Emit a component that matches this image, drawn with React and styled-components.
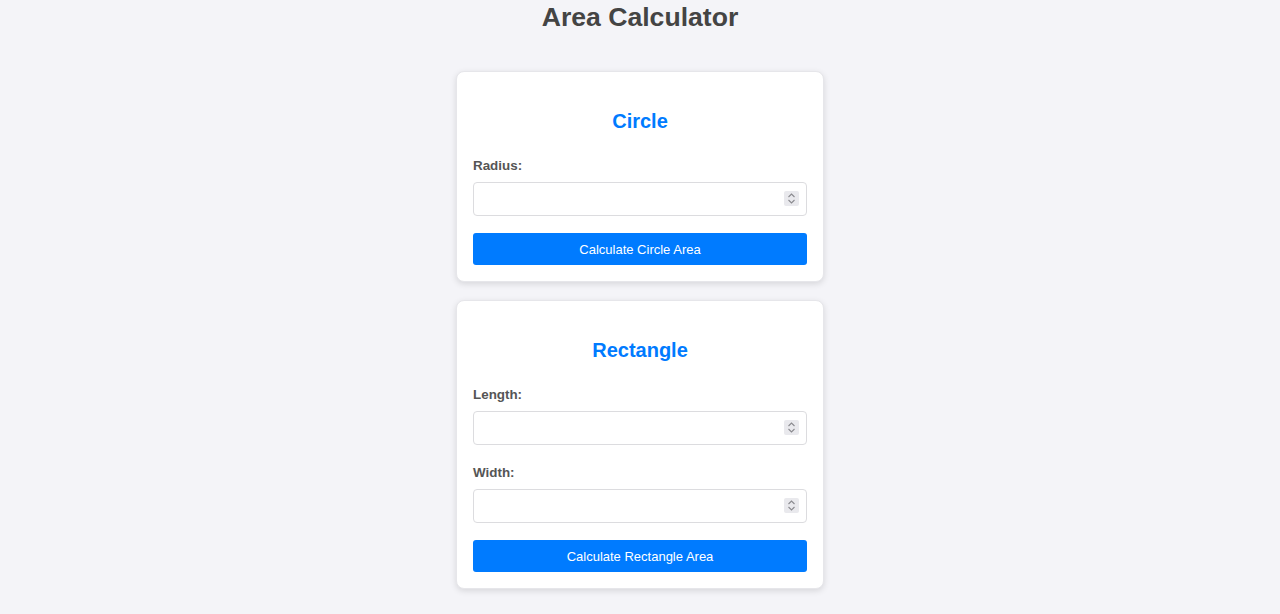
import React, { useState } from 'react';
import styled, { createGlobalStyle } from 'styled-components';

const GlobalStyle = createGlobalStyle`
  body {
    margin: 0;
    background: #f4f4f8;
    font-family: "Liberation Sans", Arial, sans-serif;
  }
`;

const Page = styled.div`
  display: flex;
  flex-direction: column;
  align-items: center;
  padding-top: 2px;
`;

const Title = styled.h1`
  margin: 0 0 39px;
  font-size: 26.6px;
  line-height: 30px;
  font-weight: bold;
  color: #444;
`;

const Card = styled.div`
  width: 368px;
  box-sizing: border-box;
  padding: 20px 16px 16px;
  background: #fff;
  border: 1px solid #e6e6ea;
  border-radius: 8px;
  box-shadow: 0 2px 6px rgba(0, 0, 0, 0.12);
  margin-bottom: 18px;
`;

const CardTitle = styled.h2`
  margin: 18px 0 24px;
  text-align: center;
  font-size: 20px;
  line-height: 23px;
  color: #007bff;
`;

const Group = styled.div`
  display: flex;
  flex-direction: column;
  margin-bottom: 19px;
`;

const Label = styled.label`
  font-size: 13.4px;
  line-height: 17px;
  font-weight: bold;
  color: #555;
  margin-bottom: 8px;
`;

const InputWrap = styled.div`
  position: relative;
`;

const NumberInput = styled.input`
  width: 100%;
  height: 34px;
  box-sizing: border-box;
  border: 1px solid #dcdcdf;
  border-radius: 4px;
  padding: 0 30px 0 8px;
  font-size: 14px;
  font-family: inherit;
  outline: none;
  -moz-appearance: textfield;
  &::-webkit-inner-spin-button,
  &::-webkit-outer-spin-button {
    -webkit-appearance: none;
    margin: 0;
  }
`;

const Spinner = styled.span`
  position: absolute;
  right: 8px;
  top: 9px;
  width: 15px;
  height: 15px;
  background: #e9e9ed;
  border-radius: 2px;
  display: flex;
  align-items: center;
  justify-content: center;
  pointer-events: none;
`;

const Button = styled.button`
  width: 100%;
  height: 32px;
  margin-top: -2px;
  border: none;
  border-radius: 3px;
  background: #007bff;
  color: #fff;
  font-family: "Liberation Sans", Arial, sans-serif;
  font-size: 13px;
  cursor: pointer;
`;

function SpinIcon() {
  return (
    <Spinner>
      <svg width="9" height="13" viewBox="0 0 9 13" fill="none" stroke="#8a8a8f" strokeWidth="1.1">
        <path d="M1.5 5 L4.5 2 L7.5 5" />
        <path d="M1.5 8 L4.5 11 L7.5 8" />
      </svg>
    </Spinner>
  );
}

function Field({ label, value, onChange }) {
  return (
    <Group>
      <Label>{label}</Label>
      <InputWrap>
        <NumberInput type="number" value={value} onChange={e => onChange(e.target.value)} />
        <SpinIcon />
      </InputWrap>
    </Group>
  );
}

export default function App() {
  const [radius, setRadius] = useState('');
  const [length, setLength] = useState('');
  const [width, setWidth] = useState('');

  return (
    <Page>
      <GlobalStyle />
      <Title>Area Calculator</Title>
      <Card>
        <CardTitle>Circle</CardTitle>
        <Field label="Radius:" value={radius} onChange={setRadius} />
        <Button>Calculate Circle Area</Button>
      </Card>
      <Card>
        <CardTitle>Rectangle</CardTitle>
        <Field label="Length:" value={length} onChange={setLength} />
        <Field label="Width:" value={width} onChange={setWidth} />
        <Button>Calculate Rectangle Area</Button>
      </Card>
    </Page>
  );
}
